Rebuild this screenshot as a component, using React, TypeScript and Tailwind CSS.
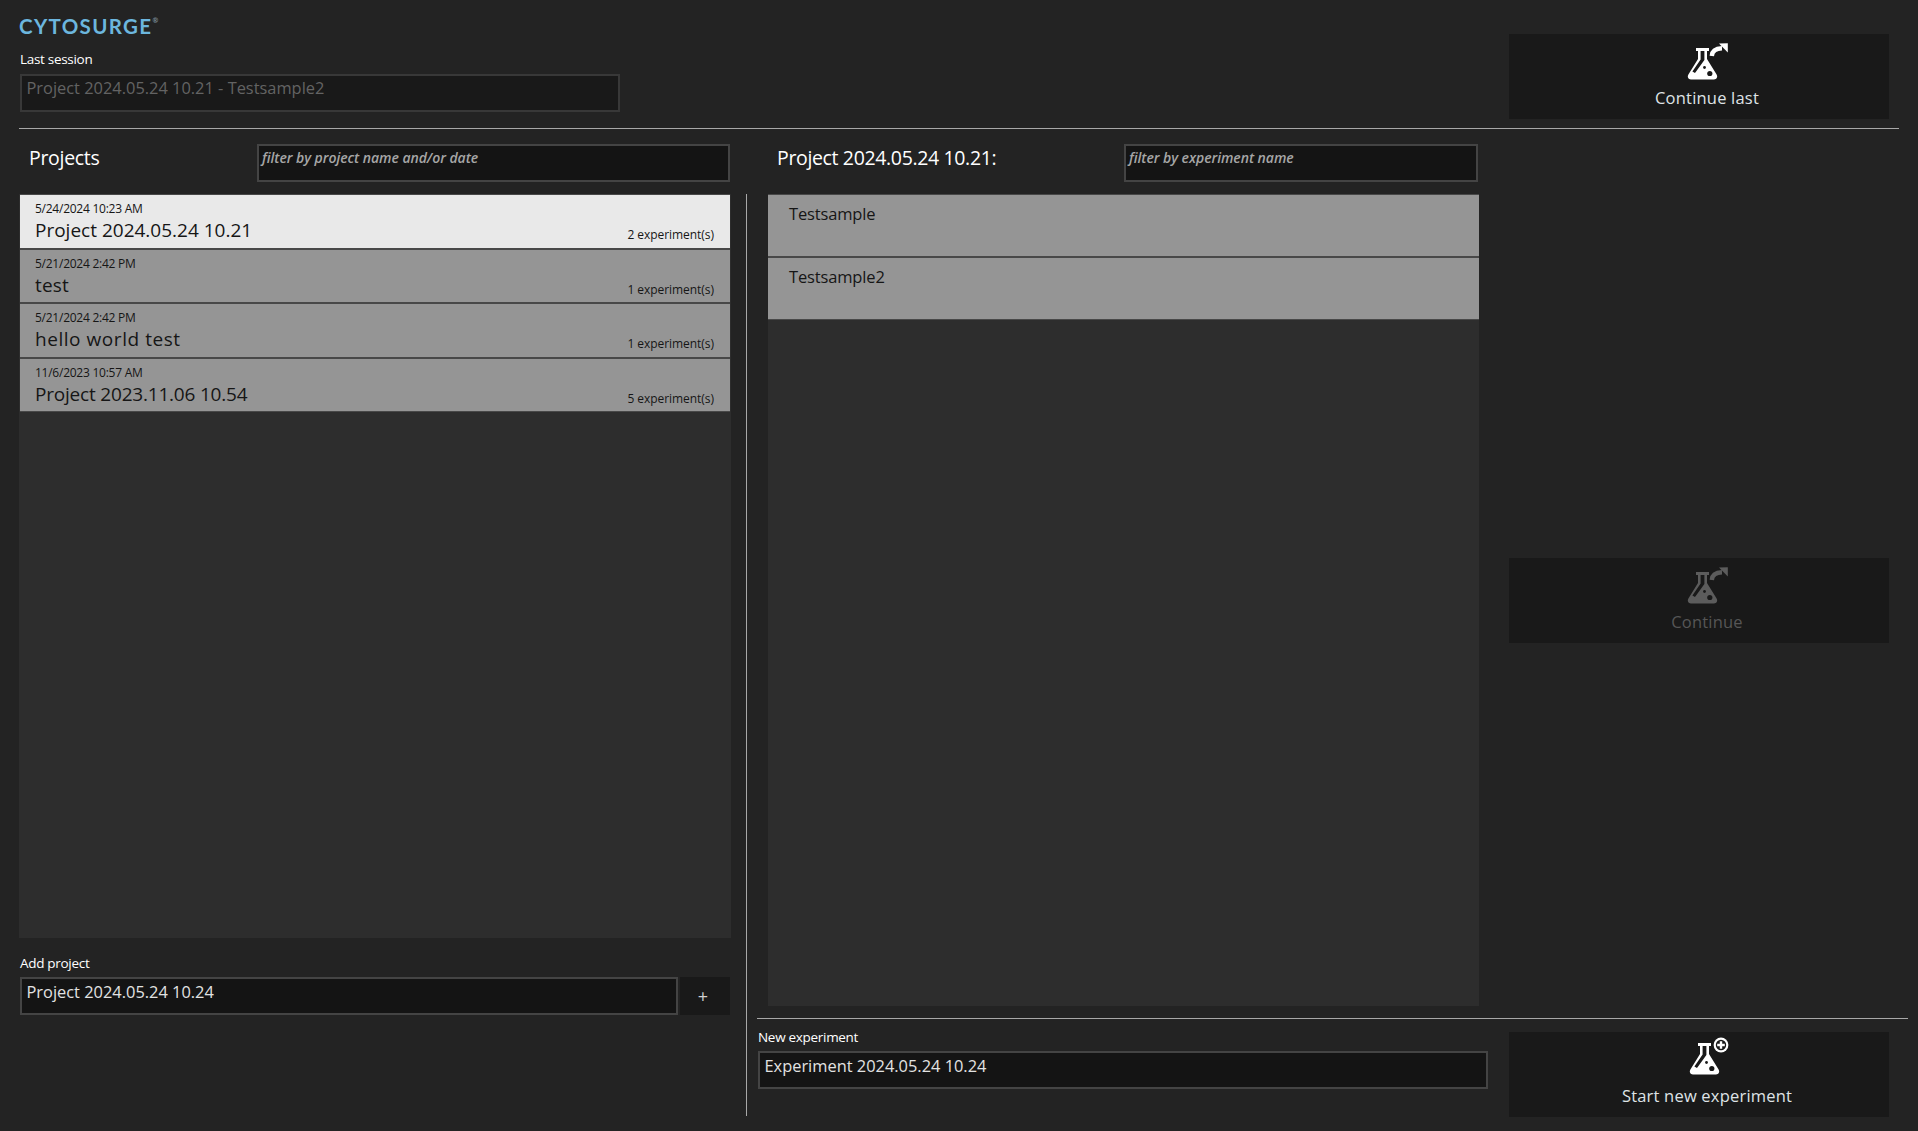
import React from "react";

function Flask({ dim, offset = 0, kind }: { dim?: boolean; offset?: number; kind: "arrow" | "plus" }) {
  const c = dim ? "#5c5c5c" : "#ffffff";
  const bg = "#191919";
  return (
    <svg width="46" height="42" viewBox="0 0 46 42" className="block">
      <g transform={`translate(${offset + 2} 0)`}>
        <path d="M10 7h13v3h-2v8l9.6 15.6c1.4 2.4.2 4.9-2.6 4.9H5c-2.8 0-4-2.5-2.6-4.9L12 18v-8h-2z" fill={c} />
        <path d="M14.6 10h3.8v9l-9.4 13-2.6-1.6L14.6 18.4z" fill={bg} />
        <circle cx="18.5" cy="26.5" r="1.4" fill={bg} />
        <circle cx="23.8" cy="32.5" r="2.6" fill={bg} />
      </g>
      {kind === "arrow" ? (
        <g>
          <path d="M27.8 15c.3-4.4 3.4-7.6 10.2-7.8" fill="none" stroke={c} strokeWidth="4.4" />
          <path d="M35 2.6l8.8-.4v9.4z" fill={c} />
        </g>
      ) : (
        <g>
          <circle cx="37" cy="9" r="7.4" fill={c} />
          <circle cx="37" cy="9" r="5.2" fill={bg} />
          <path d="M33.2 9h7.6M37 5.2v7.6" stroke={c} strokeWidth="2.4" />
        </g>
      )}
    </svg>
  );
}

function ActionButton({ label, dim, kind, iconTop, iconShift }: { label: string; dim?: boolean; kind: "arrow" | "plus"; iconTop: string; iconShift: number }) {
  return (
    <div className="w-[380px] h-[85px] bg-[#191919] flex flex-col items-center pl-[16px]">
      <div className={`h-[53px] ${iconTop}`}>
        <Flask dim={dim} kind={kind} offset={iconShift} />
      </div>
      <div className={`text-[16.5px] leading-[22px] font-medium tracking-[0.2px] ${dim ? "text-[#565656]" : "text-[#dfe3e6]"}`}>{label}</div>
    </div>
  );
}

function Field({ value, className, text }: { value: string; className: string; text: string }) {
  return (
    <div className={`h-[38px] bg-[#141414] border-2 border-[#444444] pl-[4.5px] pt-[2px] text-[16.4px] leading-[22px] ${text} ${className}`}>
      {value}
    </div>
  );
}

function Filter({ value, className }: { value: string; className: string }) {
  return (
    <div className={`h-[38px] bg-[#141414] border-2 border-[#444444] px-[3px] pt-[2px] text-[14px] leading-[20px] italic font-semibold text-[#a6a6a6] tracking-[-0.05px] ${className}`}>
      {value}
    </div>
  );
}

const projects = [
  { date: "5/24/2024 10:23 AM", name: "Project 2024.05.24 10.21", count: "2 experiment(s)", active: true, track: "tracking-[0px]" },
  { date: "5/21/2024 2:42 PM", name: "test", count: "1 experiment(s)", track: "tracking-[0.2px]" },
  { date: "5/21/2024 2:42 PM", name: "hello world test", count: "1 experiment(s)", track: "tracking-[0.55px]" },
  { date: "11/6/2023 10:57 AM", name: "Project 2023.11.06 10.54", count: "5 experiment(s)", track: "tracking-[-0.2px]" },
];

export default function App() {
  return (
    <div className="w-[1918px] h-[1131px] overflow-hidden bg-[#232323] font-['Open_Sans',sans-serif] text-white">
      <header className="h-[128px] pl-[19px] pr-[29px] flex justify-between">
        <div>
          <div className="pt-[14px] h-[47px] font-['Lato',sans-serif] font-bold text-[#6cb6de] text-[20.5px] leading-[24px] tracking-[1.35px]">
            CYTOSURGE<sup className="text-[7px] text-[#7a8a94] align-super">®</sup>
          </div>
          <div className="pl-px text-[13.5px] leading-[20px] h-[27px] pt-[2px] tracking-[-0.3px]">Last session</div>
          <Field value="Project 2024.05.24 10.21 - Testsample2" className="ml-px w-[600px] !pt-[1px] !border-[#383838] !bg-[#191919]" text="text-[#636363]" />
        </div>
        <div className="pt-[34px]">
          <ActionButton label="Continue last" kind="arrow" iconTop="pt-[7px]" iconShift={0} />
        </div>
      </header>
      <div className="h-px ml-[19px] w-[1880px] bg-[#a8a8a8]" />

      <main className="flex">
        <section className="w-[712px] ml-[19px] shrink-0">
          <div className="h-[65px] flex pl-[1px]">
            <div className="w-[237px] pl-[9px] pt-[15px] text-[19.5px] leading-[28px] tracking-[-0.3px]">Projects</div>
            <Filter value="filter by project name and/or date" className="mt-[15px] w-[473px]" />
          </div>
          <div className="h-[744px] bg-[#2d2d2d] flex flex-col px-px">
            {projects.map((p) => (
              <div
                key={p.name}
                className={`h-[54.5px] shrink-0 flex justify-between pl-[15px] pr-[16px] border-y border-[#484848] text-[#161616] ${p.active ? "bg-[#e9e9e9]" : "bg-[#959595]"}`}
              >
                <div>
                  <div className="text-[12px] leading-[16px] pt-[6px] h-[22px] tracking-[-0.25px]">{p.date}</div>
                  <div className={`text-[19px] leading-[26px] ${p.track}`}>{p.name}</div>
                </div>
                <div className="text-[12px] leading-[16px] pt-[32px] tracking-[-0.05px]">{p.count}</div>
              </div>
            ))}
          </div>
          <div className="pl-px pt-[15px] h-[39px] text-[13.5px] leading-[20px] tracking-[-0.3px]">Add project</div>
          <div className="flex gap-[2px] pl-px">
            <Field value="Project 2024.05.24 10.24" className="w-[658px]" text="text-[#e2e2e2]" />
            <div className="w-[50px] h-[38px] bg-[#191919] flex items-center justify-center text-[#d0d0d0] text-[18px] pr-[4px]">+</div>
          </div>
        </section>

        <div className="ml-[15px] w-px h-[922px] mt-[65px] bg-[#a8a8a8] shrink-0" />

        <section className="ml-[10px] w-[1151px] shrink-0">
          <div className="h-[889px] flex">
            <div className="ml-[11px] w-[711px] shrink-0">
              <div className="h-[65px] flex">
                <div className="w-[356px] pl-[9px] pt-[15px] text-[19.5px] leading-[28px] tracking-[-0.35px]">Project 2024.05.24 10.21:</div>
                <Filter value="filter by experiment name" className="mt-[15px] w-[354px]" />
              </div>
              <div className="h-[812px] bg-[#2d2d2d] flex flex-col">
                {["Testsample", "Testsample2"].map((n) => (
                  <div key={n} className="h-[63px] shrink-0 bg-[#959595] border-y border-[#484848] px-[21px] pt-[8px] text-[16.5px] leading-[22px] text-[#161616] tracking-[-0.15px]">
                    {n}
                  </div>
                ))}
              </div>
            </div>
            <div className="ml-[30px] pt-[429px]">
              <ActionButton label="Continue" dim kind="arrow" iconTop="pt-[7px]" iconShift={0} />
            </div>
          </div>
          <div className="h-px bg-[#a8a8a8]" />
          <div className="flex">
            <div>
              <div className="pl-px pt-[8px] h-[32px] text-[13.5px] leading-[20px] tracking-[-0.3px]">New experiment</div>
              <Field value="Experiment 2024.05.24 10.24" className="ml-px w-[730px]" text="text-[#e2e2e2]" />
            </div>
            <div className="ml-[21px] mt-[13px]">
              <ActionButton label="Start new experiment" kind="plus" iconTop="pt-[4px]" iconShift={2} />
            </div>
          </div>
        </section>
      </main>
    </div>
  );
}
